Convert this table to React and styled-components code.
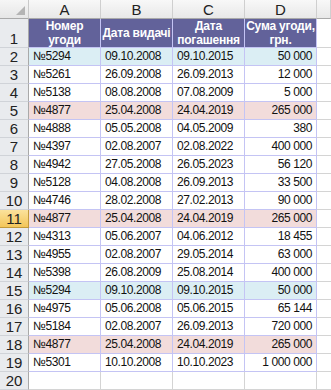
import React from "react";
import styled, { createGlobalStyle } from "styled-components";

const Global = createGlobalStyle`
  html, body {
    margin: 0;
    padding: 0;
    background: #ffffff;
    overflow: hidden;
  }
`;

const Sheet = styled.div`
  display: grid;
  grid-template-columns: 29px 72px 72px 72px 72px 1fr;
  grid-template-rows: 19px 29px;
  grid-auto-rows: 18px;
  width: 331px;
  height: 390px;
  overflow: hidden;
  font-family: "Liberation Sans", Arial, sans-serif;
  font-size: 12px;
  letter-spacing: -0.4px;
  color: #111111;
`;

const Corner = styled.div`
  box-sizing: border-box;
  display: flex;
  align-items: flex-end;
  justify-content: flex-end;
  padding: 0 3px 3px 0;
  background: linear-gradient(#f6f6f6, #e6e6e6);
  border-right: 1px solid #c9c9c9;
  border-bottom: 1px solid #a9a9a9;
`;

const ColHead = styled.div`
  box-sizing: border-box;
  display: flex;
  align-items: center;
  justify-content: center;
  font-size: 15px;
  letter-spacing: 0;
  color: #222222;
  background: linear-gradient(#f8f8f8, #e8e8e8);
  border-right: 1px solid #cfcfcf;
  border-bottom: 1px solid #a9a9a9;
`;

const RowHead = styled.div`
  box-sizing: border-box;
  display: flex;
  align-items: flex-end;
  justify-content: center;
  font-size: 15px;
  letter-spacing: 0;
  line-height: 17px;
  color: #222222;
  background: ${(p) =>
    p.$active ? "linear-gradient(#fbe29c, #f3c65a)" : "#e9ebee"};
  border-right: 1px solid ${(p) => (p.$active ? "#c29a3a" : "#a9a9a9")};
  border-bottom: 1px solid ${(p) => (p.$active ? "#c29a3a" : "#d0d3d8")};
`;

const HeadCell = styled.div`
  box-sizing: border-box;
  display: flex;
  align-items: center;
  justify-content: center;
  text-align: center;
  white-space: nowrap;
  font-weight: bold;
  letter-spacing: -0.2px;
  line-height: 14px;
  color: #ffffff;
  background: #62629a;
  border-right: 1px solid #c4c4f4;
  border-bottom: 1px solid #c4c4f4;
`;

const Cell = styled.div`
  box-sizing: border-box;
  display: flex;
  align-items: flex-end;
  justify-content: ${(p) => (p.$right ? "flex-end" : "flex-start")};
  padding: 0 4px 1px 4px;
  line-height: 16px;
  white-space: nowrap;
  background: ${(p) =>
    p.$fill === "blue" ? "#dbeef4" : p.$fill === "pink" ? "#f2dcdb" : "#ffffff"};
  border-right: 1px solid ${(p) => (p.$grid ? "#c4c4f4" : "#d4d4d4")};
  border-bottom: 1px solid ${(p) => (p.$grid ? "#c4c4f4" : "#d4d4d4")};
`;

const Blank = styled.div`
  box-sizing: border-box;
  background: #ffffff;
  border-bottom: 1px solid #d4d4d4;
`;

const rows = [
  ["№5294", "09.10.2008", "09.10.2015", "50 000", "blue"],
  ["№5261", "26.09.2008", "26.09.2013", "12 000"],
  ["№5138", "08.08.2008", "07.08.2009", "5 000"],
  ["№4877", "25.04.2008", "24.04.2019", "265 000", "pink"],
  ["№4888", "05.05.2008", "04.05.2009", "380"],
  ["№4397", "02.08.2007", "02.08.2022", "400 000"],
  ["№4942", "27.05.2008", "26.05.2023", "56 120"],
  ["№5128", "04.08.2008", "26.09.2013", "33 500"],
  ["№4746", "28.02.2008", "27.02.2013", "90 000"],
  ["№4877", "25.04.2008", "24.04.2019", "265 000", "pink"],
  ["№4313", "05.06.2007", "04.06.2012", "18 455"],
  ["№4955", "02.08.2007", "29.05.2014", "63 000"],
  ["№5398", "26.08.2009", "25.08.2014", "400 000"],
  ["№5294", "09.10.2008", "09.10.2015", "50 000", "blue"],
  ["№4975", "05.06.2008", "05.06.2015", "65 144"],
  ["№5184", "02.08.2007", "26.09.2013", "720 000"],
  ["№4877", "25.04.2008", "24.04.2019", "265 000", "pink"],
  ["№5301", "10.10.2008", "10.10.2023", "1 000 000"],
];

export default function App() {
  return (
    <>
      <Global />
      <Sheet>
        <Corner>
          <svg width="9" height="9" viewBox="0 0 9 9">
            <polygon points="9,0 9,9 0,9" fill="#b4b4b4" />
          </svg>
        </Corner>
        {["A", "B", "C", "D", ""].map((c, i) => (
          <ColHead key={i}>{c}</ColHead>
        ))}

        <RowHead>1</RowHead>
        <HeadCell>
          Номер
          <br />
          угоди
        </HeadCell>
        <HeadCell>Дата видачі</HeadCell>
        <HeadCell>
          Дата
          <br />
          погашення
        </HeadCell>
        <HeadCell>
          Сума угоди,
          <br />
          грн.
        </HeadCell>
        <Blank />

        {rows.map((r, i) => (
          <React.Fragment key={i}>
            <RowHead $active={i === 9}>{i + 2}</RowHead>
            <Cell $grid $fill={r[4]}>{r[0]}</Cell>
            <Cell $grid $fill={r[4]}>{r[1]}</Cell>
            <Cell $grid $fill={r[4]}>{r[2]}</Cell>
            <Cell $grid $fill={r[4]} $right>
              {r[3]}
            </Cell>
            <Blank />
          </React.Fragment>
        ))}

        <RowHead>20</RowHead>
        <Cell />
        <Cell />
        <Cell />
        <Cell />
        <Blank />
      </Sheet>
    </>
  );
}
